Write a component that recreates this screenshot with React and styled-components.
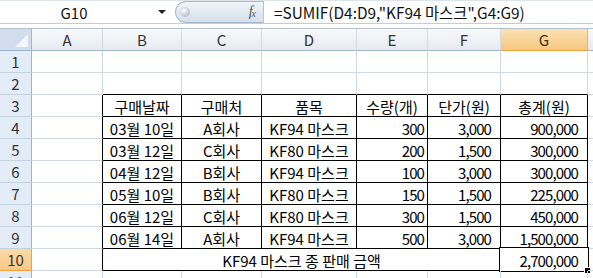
import React from "react";
import styled, { createGlobalStyle } from "styled-components";

const GlobalStyle = createGlobalStyle`
  html, body {
    margin: 0;
    padding: 0;
    background: #fff;
  }
  body {
    font-family: "Noto Sans CJK KR", "Noto Sans", sans-serif;
  }
`;

const Page = styled.div`
  width: 593px;
  height: 278px;
  overflow: hidden;
  background: #fff;
`;

const FormulaBar = styled.div`
  display: flex;
  align-items: stretch;
  height: 22px;
  border-top: 1px solid #dde3ea;
  border-bottom: 1px solid #c3ccd8;
`;

const NameBox = styled.div`
  width: 170px;
  display: flex;
  align-items: center;
  font-size: 15px;
  color: #111;
`;

const NameText = styled.span`
  flex: 1;
  text-align: center;
  padding-right: 10px;
`;

const DropArrow = styled.span`
  width: 0;
  height: 0;
  border-left: 4px solid transparent;
  border-right: 4px solid transparent;
  border-top: 4px solid #222;
  margin-right: 4px;
`;

const Pill = styled.div`
  margin-left: 5px;
  width: 88px;
  display: flex;
  align-items: center;
  justify-content: space-between;
  padding: 0 8px 0 4px;
  box-sizing: border-box;
  background: linear-gradient(#f0f4f9, #d6e0ec);
  border: 1px solid #a9b9cc;
  border-right: none;
  border-radius: 11px 0 0 11px;
`;

const Knob = styled.span`
  width: 10px;
  height: 10px;
  border-radius: 50%;
  background: radial-gradient(circle at 40% 35%, #ffffff, #c4cad2 60%, #9aa3ae);
`;

const Fx = styled.span`
  font-family: "Liberation Serif", serif;
  font-style: italic;
  font-size: 14px;
  color: #555;
  letter-spacing: -1px;
  sub {
    font-size: 10px;
    vertical-align: -1px;
  }
`;

const FormulaInput = styled.div`
  flex: 1;
  display: flex;
  align-items: center;
  padding-left: 10px;
  border-left: 1px solid #b9c5d4;
  font-size: 15.4px;
  color: #111;
  white-space: nowrap;
`;

const Spacer = styled.div`
  height: 4px;
`;

const Sheet = styled.div`
  display: grid;
  grid-template-columns: 32px 71px 79px 80px 95px 71px 73px 87px 1fr;
  grid-auto-rows: 22px;
  border-top: 1px solid #b4c0ce;
  font-size: 15px;
`;

const Corner = styled.div`
  position: relative;
  background: #d2deee;
  border-right: 1px solid #9eb6ce;
  border-bottom: 1px solid #9eb6ce;
  &::after {
    content: "";
    position: absolute;
    right: 3px;
    bottom: 3px;
    border-left: 13px solid transparent;
    border-bottom: 13px solid #f3f6fa;
  }
`;

const ColHead = styled.div`
  display: flex;
  align-items: center;
  justify-content: center;
  box-sizing: border-box;
  color: ${(p) => (p.$active ? "#3a2c14" : "#333")};
  background: ${(p) =>
    p.$active
      ? "linear-gradient(#fbe2b4, #f7c77e)"
      : "linear-gradient(#f8f9fb, #e6eaf0)"};
  border-right: 1px solid ${(p) => (p.$active ? "#f0b25b" : "#d3d9e1")};
  border-bottom: 1px solid ${(p) => (p.$active ? "#f2a33c" : "#9eb6ce")};
`;

const RowHead = styled.div`
  display: flex;
  align-items: center;
  justify-content: center;
  box-sizing: border-box;
  color: #333;
  background: ${(p) =>
    p.$active ? "linear-gradient(#fbdba5, #f8c987)" : "#e4ecf7"};
  border-right: 1px solid ${(p) => (p.$active ? "#f2a33c" : "#9eb6ce")};
  border-bottom: 1px solid ${(p) => (p.$active ? "#f2a33c" : "#c5d2e2")};
`;

const Cell = styled.div`
  position: relative;
  display: flex;
  align-items: center;
  justify-content: ${(p) =>
    p.$align === "right" ? "flex-end" : p.$align === "center" ? "center" : "flex-start"};
  padding: 1px ${(p) => p.$pad || 3}px 0 3px;
  box-sizing: border-box;
  white-space: nowrap;
  color: #000;
  letter-spacing: ${(p) => (p.$align === "right" ? "-0.9px" : "0")};
  grid-column: ${(p) => (p.$span ? `span ${p.$span}` : "auto")};
  border-right: 1px solid ${(p) => (p.$edgeR ? "#000" : "#d0d7e5")};
  border-bottom: 1px solid ${(p) => (p.$edgeB ? "#000" : "#d0d7e5")};
`;

const SelectedCell = styled(Cell)`
  &::before {
    content: "";
    position: absolute;
    top: -2px;
    left: -2px;
    right: -2px;
    bottom: -2px;
    border: 1px solid #000;
    box-shadow: inset 0 0 0 1px #fff;
    pointer-events: none;
  }
  &::after {
    content: "";
    position: absolute;
    right: -4px;
    bottom: -4px;
    width: 5px;
    height: 5px;
    background: #000;
    border: 1px solid #fff;
  }
`;

const columns = ["A", "B", "C", "D", "E", "F", "G"];

const header = ["구매날짜", "구매처", "품목", "수량(개)", "단가(원)", "총계(원)"];

const sales = [
  ["03월 10일", "A회사", "KF94 마스크", "300", "3,000", "900,000"],
  ["03월 12일", "C회사", "KF80 마스크", "200", "1,500", "300,000"],
  ["04월 12일", "B회사", "KF94 마스크", "100", "3,000", "300,000"],
  ["05월 10일", "B회사", "KF80 마스크", "150", "1,500", "225,000"],
  ["06월 12일", "C회사", "KF80 마스크", "300", "1,500", "450,000"],
  ["06월 14일", "A회사", "KF94 마스크", "500", "3,000", "1,500,000"],
];

// 수량 is plain, 단가/총계 use a number format with a trailing gap
const alignFor = (i) => (i >= 3 ? "right" : "center");
const padFor = (i) => (i >= 4 ? 9 : 3);

function EmptyRow({ n, tableBelow }) {
  return (
    <>
      <RowHead>{n}</RowHead>
      {columns.map((c, i) => (
        <Cell key={c} $edgeB={tableBelow && i >= 1} />
      ))}
      <Cell />
    </>
  );
}

function DataRow({ n, values, numeric }) {
  return (
    <>
      <RowHead>{n}</RowHead>
      <Cell $edgeR />
      {values.map((v, i) => (
        <Cell
          key={i}
          $edgeR
          $edgeB
          $align={numeric ? alignFor(i) : "center"}
          $pad={numeric ? padFor(i) : 3}
        >
          {v}
        </Cell>
      ))}
      <Cell />
    </>
  );
}

export default function App() {
  return (
    <Page>
      <GlobalStyle />
      <FormulaBar>
        <NameBox>
          <NameText>G10</NameText>
          <DropArrow />
        </NameBox>
        <Pill>
          <Knob />
          <Fx>
            f<sub>x</sub>
          </Fx>
        </Pill>
        <FormulaInput>=SUMIF(D4:D9,"KF94 마스크",G4:G9)</FormulaInput>
      </FormulaBar>
      <Spacer />
      <Sheet>
        <Corner />
        {columns.map((c) => (
          <ColHead key={c} $active={c === "G"}>
            {c}
          </ColHead>
        ))}
        <ColHead />

        <EmptyRow n={1} />
        <EmptyRow n={2} tableBelow />
        <DataRow n={3} values={header} />
        {sales.map((row, i) => (
          <DataRow key={i} n={i + 4} values={row} numeric />
        ))}

        <RowHead $active>10</RowHead>
        <Cell $edgeR />
        <Cell $span={5} $edgeR $edgeB $align="center">
          KF94 마스크 종 판매 금액
        </Cell>
        <SelectedCell $edgeR $edgeB $align="right" $pad={9}>
          2,700,000
        </SelectedCell>
        <Cell />

        <EmptyRow n={11} />
      </Sheet>
    </Page>
  );
}
